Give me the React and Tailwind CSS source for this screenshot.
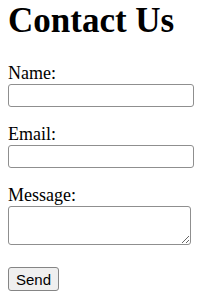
import React from 'react';

const App = () => {
  return (
    <div className="min-h-screen bg-white px-2 text-black font-['Liberation_Serif',serif]">
      <h1 className="pt-[1px] text-[35px] font-bold leading-[40px]">Contact Us</h1>
      <form className="mt-[22px] flex flex-col items-start" onSubmit={e => e.preventDefault()}>
        <label htmlFor="name" className="h-[21px] text-[18px] leading-[21px]">Name:</label>
        <input
          id="name"
          type="text"
          className="h-[23px] w-[186px] rounded-[3px] border border-[#8f8f8f] bg-white px-[2px] text-[15px]"
        />

        <label htmlFor="email" className="mt-[17px] h-[21px] text-[18px] leading-[21px]">Email:</label>
        <input
          id="email"
          type="email"
          className="h-[23px] w-[186px] rounded-[3px] border border-[#8f8f8f] bg-white px-[2px] text-[15px]"
        />

        <label htmlFor="message" className="mt-[17px] h-[21px] text-[18px] leading-[21px]">Message:</label>
        <textarea
          id="message"
          className="h-[39px] w-[183px] rounded-[3px] border border-[#8f8f8f] bg-white px-[2px] text-[15px]"
        />

        <button
          type="submit"
          className="mt-[22px] h-[24px] w-[51px] rounded-[3px] border border-[#858585] bg-[#efefef] text-[15px] leading-none font-['Liberation_Sans',Arial,sans-serif]"
        >
          Send
        </button>
      </form>
    </div>
  );
};

export default App;
